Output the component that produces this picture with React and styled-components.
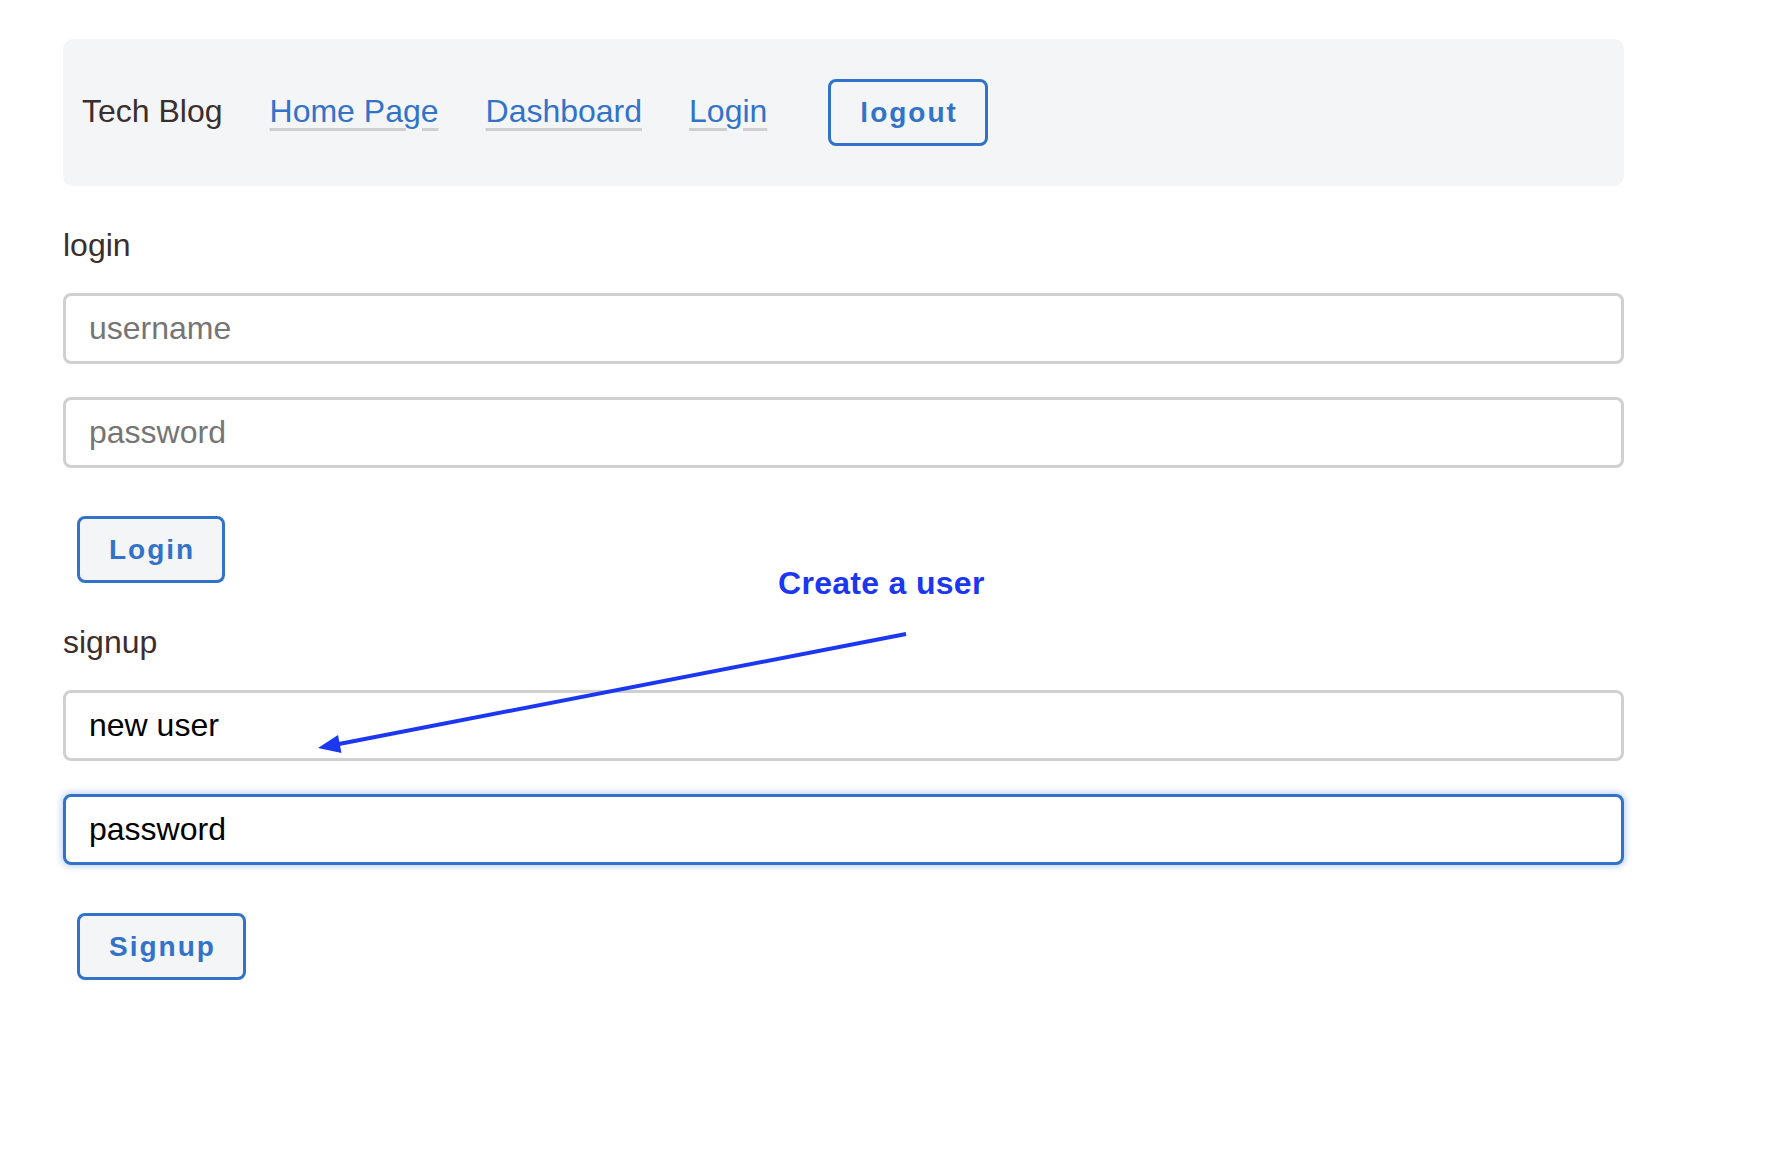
import React from 'react';
import styled, { createGlobalStyle } from 'styled-components';

const GlobalStyle = createGlobalStyle`
  body {
    margin: 0;
    background: #ffffff;
    font-family: "Liberation Sans", Arial, sans-serif;
  }
`;

const App = () => {
    return (
        <>
            <GlobalStyle />
            <Page>
                <Nav>
                    <Brand>Tech Blog</Brand>
                    <NavLink href="#">Home Page</NavLink>
                    <NavLink href="#">Dashboard</NavLink>
                    <NavLink href="#">Login</NavLink>
                    <OutlineButton $navButton>logout</OutlineButton>
                </Nav>

                <Section>
                    <Heading>login</Heading>
                    <Input placeholder="username" />
                    <Input placeholder="password" />
                    <OutlineButton>Login</OutlineButton>
                </Section>

                <Section>
                    <Heading>signup</Heading>
                    <Input defaultValue="new user" />
                    <Input defaultValue="password" $focused />
                    <OutlineButton>Signup</OutlineButton>
                </Section>

                <Note>Create a user</Note>
                <Arrow viewBox="0 0 1561 1000" width="1561" height="1000">
                    <line x1="843" y1="634" x2="276" y2="744" stroke="#1c37f2" strokeWidth="4" />
                    <polygon points="255,748 278.5,753 275,735" fill="#1c37f2" />
                </Arrow>
            </Page>
        </>
    )
};

export default App;

const Page = styled.div`
position: relative;
width: 1561px;
margin-left: 63px;
padding-top: 39px;
`;

const Nav = styled.nav`
height: 147px;
box-sizing: border-box;
background: #f4f5f7;
border-radius: 10px;
display: flex;
align-items: center;
gap: 47px;
padding: 0 19px 2px;
`;

const Brand = styled.span`
font-size: 32px;
color: #3a2e2e;
`;

const NavLink = styled.a`
font-size: 32px;
color: #3273c9;
text-decoration: underline;
text-decoration-color: #cfcfcf;
text-decoration-thickness: 3px;
text-underline-offset: 6px;
`;

const OutlineButton = styled.button`
align-self: ${props => props.$navButton ? 'center' : 'flex-start'};
margin: ${props => props.$navButton ? '2px 0 0 14px' : '15px 0 0 14px'};
height: 67px;
box-sizing: border-box;
padding: 0 27px 0 29px;
border: 3px solid #3273c9;
border-radius: 8px;
background: #f4f5f7;
color: #3273c9;
font-family: "Liberation Sans", Arial, sans-serif;
font-weight: bold;
font-size: 28px;
letter-spacing: 2px;
cursor: pointer;
`;

const Section = styled.section`
display: flex;
flex-direction: column;
gap: 33px;
padding-top: 41px;
`;

const Heading = styled.h2`
margin: 0 0 -4px;
font-size: 32px;
font-weight: normal;
line-height: 37px;
color: #3a2e2e;
`;

const Input = styled.input`
width: 100%;
height: 71px;
box-sizing: border-box;
padding: 0 23px;
border: 3px solid ${props => props.$focused ? '#3273c9' : '#d0d0d0'};
border-radius: 8px;
box-shadow: ${props => props.$focused ? '0 0 6px 2px rgba(50, 115, 220, 0.3)' : 'none'};
font-family: "Liberation Sans", Arial, sans-serif;
font-size: 32px;
color: #000000;
outline: none;

&::placeholder {
    color: #757575;
}
`;

const Note = styled.div`
position: absolute;
left: 715px;
top: 565px;
font-size: 32px;
line-height: 37px;
font-weight: bold;
letter-spacing: 0.3px;
color: #1c37f2;
`;

const Arrow = styled.svg`
position: absolute;
left: 0;
top: 0;
pointer-events: none;
`;
